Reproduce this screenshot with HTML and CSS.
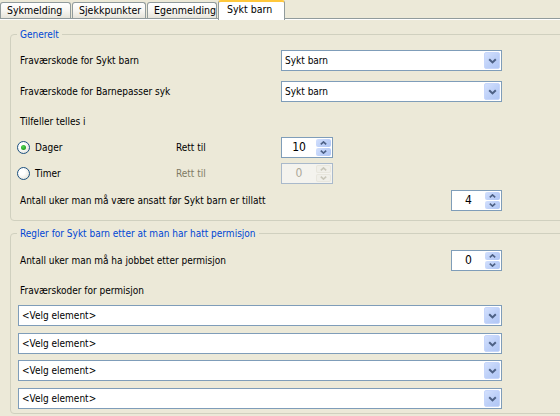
FILE: index.html
```html
<!DOCTYPE html>
<html>
<head>
<meta charset="utf-8">
<link rel="stylesheet" href="styles.css">
</head>
<body>
<div class="tabs">
  <div class="tab t1">Sykmelding</div>
  <div class="tab t2">Sjekkpunkter</div>
  <div class="tab t3">Egenmelding</div>
  <div class="tab t4 active">Sykt barn</div>
</div>
<div class="panel">
  <div class="group g1">
    <div class="group-title">Generelt</div>
    <div class="group-body b1">
      <div class="row">
        <span class="label">Fraværskode for Sykt barn</span>
        <div class="combo short"><span class="combo-text">Sykt barn</span><span class="combo-btn"><svg width="9" height="6" viewBox="0 0 9 6"><path d="M1.2 1.2 L4.5 4.4 L7.8 1.2" fill="none" stroke="#4D6185" stroke-width="2"/></svg></span></div>
      </div>
      <div class="row mt10">
        <span class="label">Fraværskode for Barnepasser syk</span>
        <div class="combo short"><span class="combo-text">Sykt barn</span><span class="combo-btn"><svg width="9" height="6" viewBox="0 0 9 6"><path d="M1.2 1.2 L4.5 4.4 L7.8 1.2" fill="none" stroke="#4D6185" stroke-width="2"/></svg></span></div>
      </div>
      <div class="row mt9">
        <span class="label">Tilfeller telles i</span>
      </div>
      <div class="row mt5">
        <span class="radio-opt"><span class="radio checked"><span class="dot"></span></span><span>Dager</span></span>
        <span class="rett">Rett til</span>
        <div class="spin"><span class="spin-val">10</span><span class="spin-btns"><span class="sb"><svg width="7" height="4" viewBox="0 0 7 4"><path d="M0.8 3.4 L3.5 0.9 L6.2 3.4" fill="none" stroke="#4D6185" stroke-width="1.6"/></svg></span><span class="sb"><svg width="7" height="4" viewBox="0 0 7 4"><path d="M0.8 0.6 L3.5 3.1 L6.2 0.6" fill="none" stroke="#4D6185" stroke-width="1.6"/></svg></span></span></div>
      </div>
      <div class="row mt5">
        <span class="radio-opt"><span class="radio"></span><span>Timer</span></span>
        <span class="rett disabled">Rett til</span>
        <div class="spin off"><span class="spin-val">0</span><span class="spin-btns"><span class="sb"><svg width="7" height="4" viewBox="0 0 7 4"><path d="M0.8 3.4 L3.5 0.9 L6.2 3.4" fill="none" stroke="#C9C7BA" stroke-width="1.6"/></svg></span><span class="sb"><svg width="7" height="4" viewBox="0 0 7 4"><path d="M0.8 0.6 L3.5 3.1 L6.2 0.6" fill="none" stroke="#C9C7BA" stroke-width="1.6"/></svg></span></span></div>
      </div>
      <div class="row spread mt6">
        <span>Antall uker man må være ansatt før Sykt barn er tillatt</span>
        <div class="spin narrow"><span class="spin-val">4</span><span class="spin-btns"><span class="sb"><svg width="7" height="4" viewBox="0 0 7 4"><path d="M0.8 3.4 L3.5 0.9 L6.2 3.4" fill="none" stroke="#4D6185" stroke-width="1.6"/></svg></span><span class="sb"><svg width="7" height="4" viewBox="0 0 7 4"><path d="M0.8 0.6 L3.5 3.1 L6.2 0.6" fill="none" stroke="#4D6185" stroke-width="1.6"/></svg></span></span></div>
      </div>
    </div>
  </div>

  <div class="group g2">
    <div class="group-title">Regler for Sykt barn etter at man har hatt permisjon</div>
    <div class="group-body b2">
      <div class="row spread">
        <span>Antall uker man må ha jobbet etter permisjon</span>
        <div class="spin narrow"><span class="spin-val">0</span><span class="spin-btns"><span class="sb"><svg width="7" height="4" viewBox="0 0 7 4"><path d="M0.8 3.4 L3.5 0.9 L6.2 3.4" fill="none" stroke="#4D6185" stroke-width="1.6"/></svg></span><span class="sb"><svg width="7" height="4" viewBox="0 0 7 4"><path d="M0.8 0.6 L3.5 3.1 L6.2 0.6" fill="none" stroke="#4D6185" stroke-width="1.6"/></svg></span></span></div>
      </div>
      <div class="row mt9">
        <span class="label">Fraværskoder for permisjon</span>
      </div>
      <div class="row mt4">
        <div class="combo wide"><span class="combo-text">&lt;Velg element&gt;</span><span class="combo-btn"><svg width="9" height="6" viewBox="0 0 9 6"><path d="M1.2 1.2 L4.5 4.4 L7.8 1.2" fill="none" stroke="#4D6185" stroke-width="2"/></svg></span></div>
      </div>
      <div class="row mt7">
        <div class="combo wide"><span class="combo-text">&lt;Velg element&gt;</span><span class="combo-btn"><svg width="9" height="6" viewBox="0 0 9 6"><path d="M1.2 1.2 L4.5 4.4 L7.8 1.2" fill="none" stroke="#4D6185" stroke-width="2"/></svg></span></div>
      </div>
      <div class="row mt6">
        <div class="combo wide"><span class="combo-text">&lt;Velg element&gt;</span><span class="combo-btn"><svg width="9" height="6" viewBox="0 0 9 6"><path d="M1.2 1.2 L4.5 4.4 L7.8 1.2" fill="none" stroke="#4D6185" stroke-width="2"/></svg></span></div>
      </div>
      <div class="row mt7">
        <div class="combo wide"><span class="combo-text">&lt;Velg element&gt;</span><span class="combo-btn"><svg width="9" height="6" viewBox="0 0 9 6"><path d="M1.2 1.2 L4.5 4.4 L7.8 1.2" fill="none" stroke="#4D6185" stroke-width="2"/></svg></span></div>
      </div>
    </div>
  </div>
</div>
</body>
</html>
```

FILE: styles.css
```css
html, body {
  margin: 0;
  padding: 0;
}
body {
  width: 560px;
  height: 416px;
  overflow: hidden;
  background: #ECE9D8;
  font-family: "DejaVu Sans Condensed", "DejaVu Sans", sans-serif;
  font-size: 10px;
  color: #000;
}

/* tabs */
.tabs {
  display: flex;
  align-items: flex-start;
  gap: 1px;
  height: 18px;
  border-bottom: 1px solid #919B9C;
}
.tab {
  box-sizing: border-box;
  flex: none;
  height: 16px;
  margin-top: 2px;
  padding-left: 6px;
  line-height: 15px;
  font-size: 10.5px;
  border: 1px solid #919B9C;
  border-bottom: none;
  border-radius: 3px 3px 0 0;
  background: linear-gradient(#FFFFFF, #F7F6F2 50%, #E6E4DA);
  white-space: nowrap;
}
.t1 { width: 71px; }
.t2 { width: 74px; }
.t3 { width: 70px; }
.t4 { width: 67px; }
.tab.active {
  height: 20px;
  margin-top: 0;
  padding-left: 8px;
  line-height: 14px;
  border-top: 2px solid #FFC83C;
  background: #FFFFFF;
}

.panel {
  border-top: 1px solid #FFFFFF;
  padding-top: 14px;
}

/* group boxes */
.group {
  position: relative;
  margin-left: 10px;
  margin-right: -20px;
  border: 1px solid #D0D0BF;
  border-radius: 4px;
}
.g2 {
  margin-top: 12px;
}
.group-title {
  position: absolute;
  top: -7px;
  left: 6px;
  padding: 0 3px;
  line-height: 13px;
  background: #ECE9D8;
  color: #0046D5;
  white-space: nowrap;
}
.group-body {
  width: 482px;
  display: flex;
  flex-direction: column;
  padding-left: 9px;
}
.b1 { padding-top: 15px; padding-bottom: 9px; }
.b2 { padding-top: 16px; padding-bottom: 4px; }

.row {
  display: flex;
  align-items: center;
  height: 21px;
  white-space: nowrap;
}
.row.spread { justify-content: space-between; }
.mt4 { margin-top: 4px; }
.mt5 { margin-top: 5px; }
.mt6 { margin-top: 6px; }
.mt7 { margin-top: 7px; }
.mt9 { margin-top: 9px; }
.mt10 { margin-top: 10px; }

.label {
  flex: none;
  width: 261px;
}

/* combo box */
.combo {
  box-sizing: border-box;
  height: 21px;
  display: flex;
  align-items: center;
  justify-content: space-between;
  border: 1px solid #7F9DB9;
  background: #FFFFFF;
  padding-left: 3px;
}
.combo.short { width: 221px; }
.combo.wide { width: 484px; margin-left: -2px; }
.combo-btn {
  box-sizing: border-box;
  width: 16px;
  height: 17px;
  margin-right: 1px;
  display: flex;
  align-items: center;
  justify-content: center;
  border-radius: 2px;
  border: 1px solid #C6D6FB;
  background: linear-gradient(135deg, #D3E0FD 0%, #BDD0F8 55%, #B0C6F5 100%);
}

/* spinner */
.spin {
  box-sizing: border-box;
  width: 52px;
  height: 21px;
  display: flex;
  border: 1px solid #7F9DB9;
  background: #FFFFFF;
}
.spin.narrow { width: 51px; }
.spin-val {
  flex: 1;
  text-align: center;
  line-height: 19px;
  font-size: 12px;
}
.spin-btns {
  width: 15px;
  margin: 1px 1px 1px 0;
  display: flex;
  flex-direction: column;
  gap: 1px;
}
.sb {
  flex: 1;
  display: flex;
  align-items: center;
  justify-content: center;
  border-radius: 2px;
  background: linear-gradient(135deg, #D3E0FD 0%, #BDD0F8 55%, #B0C6F5 100%);
}
.spin.off {
  border-color: #A9B9CB;
  background: #F4F3EE;
}
.spin.off .spin-val { color: #ACA899; }
.spin.off .sb {
  background: #F0EFE9;
  box-shadow: inset 0 0 0 1px #E8E6DD;
}

/* radios */
.radio-opt {
  flex: none;
  width: 159px;
  margin-left: -3px;
  display: flex;
  align-items: center;
  gap: 5px;
}
.radio {
  box-sizing: border-box;
  width: 13px;
  height: 13px;
  border-radius: 50%;
  border: 1px solid #1C5180;
  background: radial-gradient(circle at 35% 35%, #FFFFFF 30%, #E6E5DD 80%, #D4D2C6 100%);
  display: flex;
  align-items: center;
  justify-content: center;
}
.dot {
  width: 5px;
  height: 5px;
  border-radius: 50%;
  background: radial-gradient(circle at 40% 35%, #55D655, #21A121 70%);
}
.rett {
  flex: none;
  width: 105px;
}
.rett.disabled { color: #7E7A63; }
```
